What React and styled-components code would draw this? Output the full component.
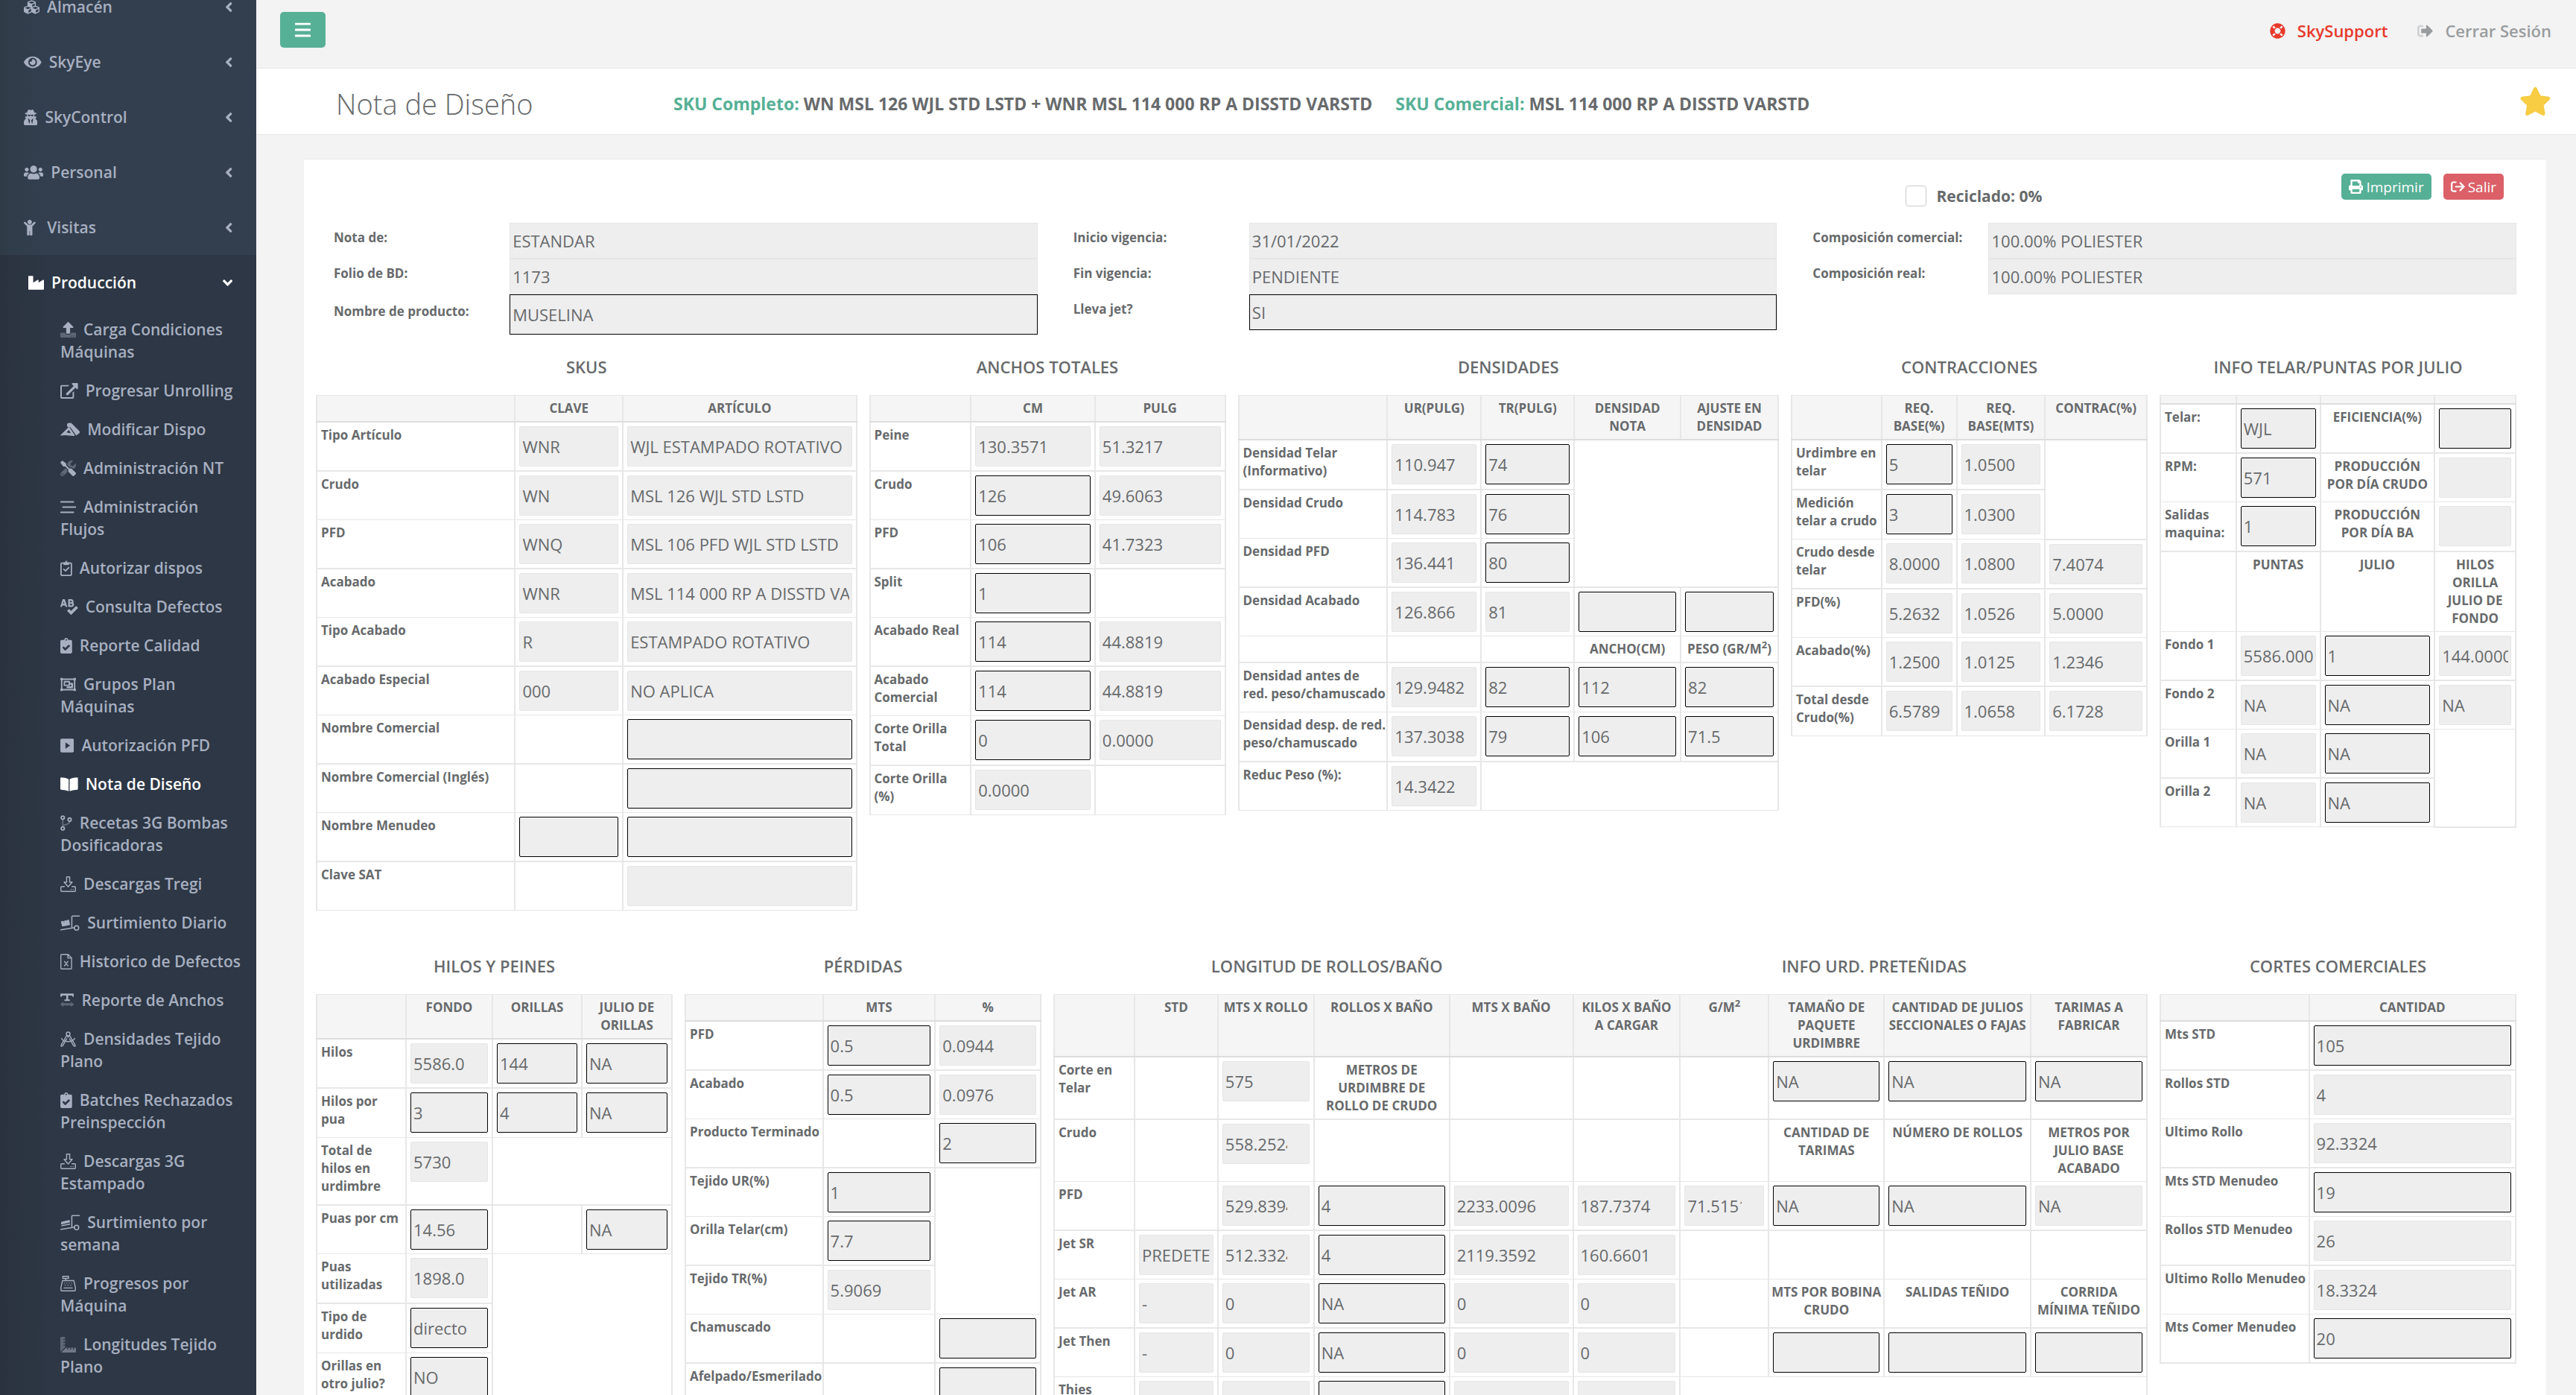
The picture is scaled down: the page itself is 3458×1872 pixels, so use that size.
import React from "react";
import styled, { createGlobalStyle, css } from "styled-components";
import { IconContext } from "react-icons";
import {
  FaCubes, FaEye, FaUserSecret, FaUsers, FaChild, FaIndustry, FaAngleLeft, FaAngleDown,
  FaSpellCheck, FaClipboardCheck, FaBookOpen, FaLifeRing, FaStar, FaPrint,
} from "react-icons/fa";

const ink = "#676a6c";
const line = "#e7e7e7";
const green = "#56b095";

const GlobalStyle = createGlobalStyle`
  * { box-sizing: border-box; }
  body {
    margin: 0;
    background: #f3f3f3;
    color: ${ink};
    font-family: "Open Sans", "Noto Sans", sans-serif;
    font-size: 21px;
    line-height: 30px;
  }
  h1, h2, p, ul { margin: 0; padding: 0; font-weight: inherit; }
  ul { list-style: none; }
  a { color: inherit; text-decoration: none; }
  button, input { font-family: inherit; color: inherit; }
`;

/* ---------- icons ---------- */

const Svg = styled.svg`
  fill: currentColor;
`;

const Glyph = ({ w = 512, children }) => (
  <Svg viewBox={`0 0 ${w} 512`} aria-hidden="true">{children}</Svg>
);

const Outline = ({ w = 512, weight = 40, children }) => (
  <Svg viewBox={`0 0 ${w} 512`} aria-hidden="true" style={{ fill: "none" }}
    stroke="currentColor" strokeWidth={weight} strokeLinecap="round" strokeLinejoin="round">
    {children}
  </Svg>
);

const UploadIcon = () => (
  <Glyph>
    <path d="M296 384h-80c-13.3 0-24-10.7-24-24V192h-87.7c-17.8 0-26.7-21.5-14.1-34.1L242.3 5.7c7.5-7.5 19.8-7.5 27.3 0l152.2 152.2c12.6 12.6 3.7 34.1-14.1 34.1H320v168c0 13.3-10.7 24-24 24z" />
    <path opacity=".4" d="M512 376v112c0 13.3-10.7 24-24 24H24c-13.3 0-24-10.7-24-24V376c0-13.3 10.7-24 24-24h136v8c0 30.9 25.1 56 56 56h80c30.9 0 56-25.1 56-56v-8h136c13.3 0 24 10.7 24 24zm-124 88c0-11-9-20-20-20s-20 9-20 20 9 20 20 20 20-9 20-20zm64 0c0-11-9-20-20-20s-20 9-20 20 9 20 20 20 20-9 20-20z" />
  </Glyph>
);

const ExternalIcon = () => (
  <Glyph w={576}>
    <path d="M0 112c0-26 21-48 48-48h250l-48 48H48v352h352V310l48-40v194c0 27-21 48-48 48H48c-26 0-48-21-48-48z" />
    <path d="M400 0h152c13 0 24 11 24 24v152c0 21-26 32-41 17l-42-42-246 246c-9 9-24 9-34 0l-22-22c-9-9-9-24 0-34L437 95l-54-54C368 26 379 0 400 0z" />
  </Glyph>
);

const HandIcon = () => (
  <Glyph w={640}>
    <path d="M232 56 C250 40 300 34 345 36 L378 58 L610 290 C640 322 648 344 622 372 L520 452 L330 180 L250 180 C215 165 210 80 232 56z" />
    <path fillRule="evenodd" d="M2 440 L255 190 L300 182 L480 448 L440 466 L140 436 L40 450 C8 456 -6 450 2 440z M205 350 L345 378 L280 268z" />
  </Glyph>
);

const ToolsIcon = () => (
  <Glyph>
    <path d="M501.1 395.7L384 278.6c-23.1-23.1-57.6-27.6-85.4-13.9L192 158.1V96L64 0 0 64l96 128h62.1l106.6 106.6c-13.6 27.8-9.2 62.3 13.9 85.4l117.1 117.1c14.6 14.6 38.2 14.6 52.7 0l52.7-52.7c14.5-14.6 14.5-38.2 0-52.7z" />
    <path opacity=".4" d="M331.7 225c28.3 0 54.9 11 74.9 31l19.4 19.4c15.8-6.9 30.8-16.5 43.8-29.5 37.1-37.1 49.7-89.3 37.9-136.7-2.2-9-13.5-12.1-20.1-5.5l-74.4 74.4-67.9-11.3L334 98.9l74.4-74.4c6.6-6.6 3.4-17.9-5.7-20.2-47.4-11.7-99.6.9-136.6 37.9-28.5 28.5-41.9 66.1-41.2 103.6l82.1 82.1c8.1-1.9 16.5-2.9 24.7-2.9zm-103.9 82l-56.7-56.7L18.7 402.8c-25 25-25 65.5 0 90.5s65.5 25 90.5 0l123.6-123.6c-7.6-19.9-9.9-41.6-5-62.7zM64 472c-13.2 0-24-10.8-24-24 0-13.3 10.7-24 24-24s24 10.7 24 24c0 13.2-10.7 24-24 24z" />
  </Glyph>
);

const StreamIcon = () => (
  <Glyph>
    <rect x="0" y="60" width="448" height="52" rx="14" />
    <rect x="64" y="230" width="448" height="52" rx="14" />
    <rect x="0" y="400" width="448" height="52" rx="14" />
  </Glyph>
);

const ClipboardIcon = () => (
  <Outline w={384} weight={44}>
    <rect x="22" y="86" width="340" height="404" rx="26" />
    <path d="M112 290 L168 344 L276 238" />
    <path d="M120 80h144v48H120z M192 30v40" fill="currentColor" />
  </Outline>
);

const GroupIcon = () => (
  <Outline weight={46}>
    <rect x="44" y="84" width="424" height="344" />
    <path strokeWidth="76" d="M40 80h1 M471 80h1 M40 432h1 M471 432h1" strokeLinecap="square" />
    <path d="M132 164h160v120H132z" />
    <path d="M336 232h50v116H232" strokeWidth="60" />
  </Outline>
);

const PlayIcon = () => (
  <Glyph w={448}>
    <path fillRule="evenodd" d="M48 32h352c26 0 48 21 48 48v352c0 26-22 48-48 48H48c-27 0-48-22-48-48V80c0-27 21-48 48-48zm120 118v212l150-106z" />
  </Glyph>
);

const BranchIcon = () => (
  <Outline w={384} weight={44}>
    <circle cx="80" cy="80" r="52" />
    <circle cx="80" cy="432" r="52" />
    <circle cx="304" cy="144" r="52" />
    <path opacity=".45" d="M80 140v232 M304 204c0 110-120 80-214 140" />
  </Outline>
);

const DownloadIcon = () => (
  <Outline weight={34}>
    <path d="M206 20h100v170h84L256 340 122 190h84z" />
    <path d="M130 336H40c-12 0-22 10-22 22v112c0 14 10 24 22 24h432c12 0 22-10 22-24V358c0-12-10-22-22-22h-90" />
    <path d="M350 424h2 M420 424h2" />
  </Outline>
);

const CartIcon = ({ flat }) => (
  <Outline w={640} weight={38}>
    <path d="M624 32H400c-14 0-24 8-24 24v340" />
    <path d="M20 484 L436 412" />
    <circle cx="530" cy="420" r="72" />
    {flat ? (
      <path fill="currentColor" d="M50 250 L290 196 L300 240 L40 300z M50 360 L310 310" />
    ) : (
      <path fill="currentColor" d="M40 220 L90 210 L110 270 L150 262 L140 200 L190 190 L210 250 L240 242 L230 180 L270 172 L296 310 L70 352z" />
    )}
  </Outline>
);

const FileIcon = () => (
  <Outline w={384} weight={34}>
    <path d="M40 17h212l115 115v340c0 12-10 23-23 23H40c-13 0-23-11-23-23V40c0-13 10-23 23-23z M246 20v118h118" />
    <path d="M136 250l112 140 M248 250L136 390" />
  </Outline>
);

const TextWidthIcon = () => (
  <Glyph w={448}>
    <path d="M20 32h408c11 0 20 9 20 20v80h-56V96H256v128h56v48H136v-48h56V96H56v36H0V52c0-11 9-20 20-20z" />
    <path opacity=".4" d="M440 374 L346 300v48H102v-48L8 374c-8 7-8 17 0 24l94 72v-48h244v48l94-72c8-7 8-17 0-24z" />
  </Glyph>
);

const CompassIcon = () => (
  <Outline weight={34}>
    <circle cx="256" cy="84" r="60" />
    <path d="M214 130 L30 440 L24 490 L76 470 L210 246 M298 130 L482 440 L488 490 L436 470 L302 246" />
    <path d="M40 230c60 130 340 150 434 0 M226 150l30 40 30-40" />
  </Outline>
);

const RegisterIcon = () => (
  <Outline weight={34}>
    <path d="M80 20h190v64H80z M176 86v70" />
    <path d="M70 160h372l50 220v90c0 14-10 24-24 24H44c-14 0-24-10-24-24v-90z" />
    <path d="M120 400h272" />
    <path d="M130 240h2 M210 240h2 M290 240h2 M370 240h2 M160 310h2 M250 310h2 M340 310h2" />
  </Outline>
);

const RulerIcon = () => (
  <Glyph>
    <path opacity=".4" d="M160 288h-56c-4 0-8-4-8-8v-16c0-4 4-8 8-8h56v-64h-56c-4 0-8-4-8-8v-16c0-4 4-8 8-8h56V96h-56c-4 0-8-4-8-8V72c0-4 4-8 8-8h56V32c0-18-14-32-32-32H32C14 0 0 14 0 32v448c0 3 1 5 1 8l159-159z" />
    <path opacity=".55" d="M480 352h-32v56c0 4-4 8-8 8h-16c-4 0-8-4-8-8v-56h-64v56c0 4-4 8-8 8h-16c-4 0-8-4-8-8v-56h-64v56c0 4-4 8-8 8h-16c-4 0-8-4-8-8v-56h-41L24 511c3 0 5 1 8 1h448c18 0 32-14 32-32v-96c0-18-14-32-32-32z" />
  </Glyph>
);

const BarsIcon = () => (
  <Glyph w={448}>
    <rect x="0" y="56" width="448" height="60" rx="12" />
    <rect x="0" y="226" width="448" height="60" rx="12" />
    <rect x="0" y="396" width="448" height="60" rx="12" />
  </Glyph>
);

const SignOutIcon = () => (
  <Glyph>
    <path opacity=".4" d="M96 64h84c7 0 12 5 12 12v40c0 7-5 12-12 12H96c-18 0-32 14-32 32v192c0 18 14 32 32 32h84c7 0 12 5 12 12v40c0 7-5 12-12 12H96c-53 0-96-43-96-96V160c0-53 43-96 96-96z" />
    <path d="M497 273L329 441c-15 15-41 4.500-41-17v-96H152c-13 0-24-11-24-24v-96c0-13 11-24 24-24h136V88c0-21 26-32 41-17l168 168c9 9 9 25 0 34z" />
  </Glyph>
);

const ExitIcon = () => (
  <Outline weight={60}>
    <path d="M180 94H96c-36 0-66 30-66 66v192c0 36 30 66 66 66h84" />
    <path d="M180 256h280 M340 124l132 132-132 132" />
  </Outline>
);

/* ---------- sidebar ---------- */

const Shell = styled.div`
  display: flex;
  height: 100vh;
  overflow: hidden;
`;

const Sidebar = styled.nav`
  flex: none;
  width: 344px;
  overflow: hidden;
  background: linear-gradient(to right, #2f3c48, #333f4f 66px);
  color: #a7afc0;
  font-weight: 600;
`;

const Menu = styled.ul`
  margin-top: -28px;
`;

const Section = styled.li`
  ${(p) => p.$open && css`
    background: linear-gradient(to right, #2a323e, #2d3745 66px);
    padding-bottom: 16px;
  `}
`;

const iconSize = css`
  svg {
    flex: none;
    width: auto;
    height: 21px;
  }
`;

const SectionLink = styled.a`
  display: flex;
  align-items: center;
  gap: 10px;
  padding: 22px 32px 22px ${(p) => (p.$open ? 38 : 32)}px;
  color: ${(p) => (p.$open ? "#fff" : "inherit")};
  ${iconSize}
  svg:last-child { margin-left: auto; }
`;

const SubLink = styled.a`
  display: block;
  padding: 11px 18px 11px 81px;
  color: ${(p) => (p.$current ? "#fff" : "inherit")};
  ${iconSize}
  svg {
    margin-right: 10px;
    vertical-align: -3px;
  }
`;

const sections = [
  ["Almacén", FaCubes], ["SkyEye", FaEye], ["SkyControl", FaUserSecret],
  ["Personal", FaUsers], ["\u00a0Visitas", FaChild],
];

const pages = [
  ["Carga Condiciones Máquinas", UploadIcon],
  ["Progresar Unrolling", ExternalIcon],
  ["Modificar Dispo", HandIcon],
  ["Administración NT", ToolsIcon],
  ["Administración Flujos", StreamIcon],
  ["Autorizar dispos", ClipboardIcon],
  ["Consulta Defectos", FaSpellCheck],
  ["Reporte Calidad", FaClipboardCheck],
  ["Grupos Plan Máquinas", GroupIcon],
  ["Autorización PFD", PlayIcon],
  ["Nota de Diseño", FaBookOpen],
  ["Recetas 3G Bombas Dosificadoras", BranchIcon],
  ["Descargas Tregi", DownloadIcon],
  ["Surtimiento Diario", CartIcon],
  ["Historico de Defectos", FileIcon],
  ["Reporte de Anchos", TextWidthIcon],
  ["Densidades Tejido Plano", CompassIcon],
  ["Batches Rechazados Preinspección", FaClipboardCheck],
  ["Descargas 3G Estampado", DownloadIcon],
  ["Surtimiento por semana", () => <CartIcon flat />],
  ["Progresos por Máquina", RegisterIcon],
  ["Longitudes Tejido Plano", RulerIcon],
];

/* ---------- page chrome ---------- */

const Main = styled.main`
  flex: 1;
  min-width: 0;
`;

const TopBar = styled.header`
  display: flex;
  justify-content: space-between;
  align-items: flex-start;
  height: 92px;
  padding: 16px 33px 0 32px;
  border-bottom: 1px solid ${line};
`;

const MenuButton = styled.button`
  display: flex;
  align-items: center;
  height: 48px;
  padding: 0 20px;
  border: 0;
  border-radius: 5px;
  background: ${green};
  color: #fff;
  svg { width: auto; height: 24px; }
`;

const TopLinks = styled.div`
  display: flex;
  gap: 40px;
  padding-top: 10px;
  font-size: 22px;
  font-weight: 600;
`;

const TopLink = styled.a`
  display: flex;
  align-items: center;
  gap: 16px;
  color: ${(p) => (p.$alert ? "#e8392a" : "#999c9e")};
  ${iconSize}
`;

const Heading = styled.div`
  display: grid;
  grid-template-columns: 453px 1fr auto;
  align-items: center;
  height: 89px;
  padding: 0 33px 0 107px;
  background: #fff;
  border-bottom: 1px solid ${line};
`;

const Title = styled.h1`
  padding-top: 5px;
  font-size: 38px;
  font-weight: 300;
  line-height: 48px;
`;

const Skus = styled.div`
  display: flex;
  gap: 31px;
  padding-top: 5px;
  font-size: 23px;
  font-weight: 700;
`;

const Accent = styled.span`
  color: ${green};
`;

const StarButton = styled.button`
  display: flex;
  padding: 0;
  border: 0;
  background: none;
  color: #f8cc43;
  svg { width: auto; height: 38px; }
`;

const Card = styled.section`
  margin: 32px 40px 0 64px;
  padding: 0 40px 40px 16px;
  background: #fff;
  border-top: 1px solid ${line};
`;

const Tools = styled.div`
  display: grid;
  grid-template-columns: 1fr 585px auto;
  align-items: start;
  height: 85px;
  padding: 19px 17px 0 0;
`;

const Check = styled.label`
  grid-column: 2;
  display: flex;
  align-items: center;
  gap: 13px;
  padding-top: 15px;
  font-weight: 700;
`;

const CheckBox = styled.input`
  appearance: none;
  width: 28px;
  height: 28px;
  margin: 0;
  border: 1px solid #ccc;
  border-radius: 4px;
  background: #fff;
`;

const Buttons = styled.div`
  display: flex;
  gap: 16px;
`;

const Button = styled.button`
  display: flex;
  align-items: center;
  gap: 4px;
  height: 35px;
  padding: 0 10px;
  border: 0;
  border-radius: 5px;
  background: ${(p) => p.$tone};
  color: #fff;
  font-size: 19px;
  svg { width: auto; height: 19px; }
`;

/* ---------- form ---------- */

const Field = styled.input`
  display: block;
  width: 100%;
  height: 54px;
  padding: 0 ${(p) => (p.$spin ? 29 : 3)}px 0 3px;
  border: 1px solid ${(p) => (p.$edit ? "#000" : "#e5e6e7")};
  border-radius: 2px;
  outline: 0;
  background: #eee;
  font-size: 22px;
`;

const Form = styled.form`
  display: grid;
  grid-template-columns: repeat(3, 1fr);
  align-items: start;
  column-gap: 48px;
  padding-left: 24px;
`;

const FormRow = styled.div`
  display: grid;
  grid-template-columns: 1fr 3fr;
  label {
    padding-top: ${(p) => (p.$tall ? 11 : 8)}px;
    font-size: 17px;
    font-weight: 700;
    line-height: 24px;
  }
  input {
    height: ${(p) => (p.$tall ? 54 : 48)}px;
    border-radius: 0;
  }
`;

const general = [
  [["Nota de:", "ESTANDAR"], ["Folio de BD:", "1173"], ["Nombre de producto:", "MUSELINA", true, true]],
  [["Inicio vigencia:", "31/01/2022"], ["Fin vigencia:", "PENDIENTE"], ["Lleva jet?", "SI", true]],
  [["Composición comercial:", "100.00% POLIESTER"], ["Composición real:", "100.00% POLIESTER"]],
];

/* ---------- data tables ---------- */

const Panels = styled.div`
  display: grid;
  grid-template-columns: repeat(12, 1fr);
  align-items: start;
  column-gap: 16px;
  padding-top: ${(p) => p.$space}px;
`;

const Panel = styled.section`
  grid-column: span ${(p) => p.$span};
`;

const Titles = styled.div`
  display: flex;
`;

const PanelTitle = styled.h2`
  flex: 1;
  margin-bottom: 25px;
  font-size: 22px;
  font-weight: 600;
  line-height: 26px;
  text-align: center;
`;

const Table = styled.table`
  width: 100%;
  table-layout: fixed;
  border-collapse: collapse;
  font-size: 17px;
  line-height: 24px;
`;

const cell = css`
  padding: 5px;
  border: 2px solid ${line};
  border-top-width: 1px;
  border-bottom-width: 1px;
  vertical-align: top;
  tr:nth-child(odd) > & { border-bottom-width: 2px; }
`;

const HeadCell = styled.th`
  ${cell}
  padding-right: 2px;
  padding-left: 2px;
  background: #f5f5f5;
  border-bottom-color: #ddd;
  text-align: center;
`;

const LabelCell = styled.th`
  ${cell}
  padding-right: 1px;
  text-align: left;
  label { display: block; margin-bottom: 7px; white-space: pre-line; }
`;

const Cell = styled.td`
  ${cell}
`;

const CaptionCell = styled.td`
  ${cell}
  padding-right: 2px;
  padding-left: 2px;
  font-weight: 700;
  text-align: center;
`;

const Sup = styled.sup`
  font-size: 13px;
  line-height: 0;
`;

const g = (value) => ({ kind: "field", value });
const e = (value = "") => ({ kind: "field", value, edit: true });
const n = (value) => ({ kind: "field", value, spin: true });
const c = (text) => ({ kind: "caption", text });
const x = (colSpan = 1, rowSpan = 1) => ({ kind: "blank", colSpan, rowSpan });

const squared = (text) => {
  const [before, after] = text.split("²");
  return after === undefined ? text : <>{before}<Sup>2</Sup>{after}</>;
};

function DataTable({ name, cols, head, rows }) {
  const total = cols.reduce((a, b) => a + b, 0);
  return (
    <Table aria-label={name}>
      <colgroup>
        {cols.map((w, i) => <col key={i} style={{ width: `${(w / total) * 100}%` }} />)}
      </colgroup>
      <thead>
        <tr>{head.map((h, i) => <HeadCell key={i} scope="col">{squared(h)}</HeadCell>)}</tr>
      </thead>
      <tbody>
        {rows.map(([label, ...cells], r) => {
          const firstField = cells.findIndex((k) => k.kind === "field");
          const id = `${name}-${r}`.replace(/[^\w-]/g, "");
          return (
            <tr key={r}>
              <LabelCell scope="row">
                {label && <label htmlFor={`${id}-${firstField}`}>{label}</label>}
              </LabelCell>
              {cells.map((k, i) => {
                if (k.kind === "caption") return <CaptionCell key={i}>{squared(k.text)}</CaptionCell>;
                if (k.kind === "blank") return <Cell key={i} colSpan={k.colSpan} rowSpan={k.rowSpan} />;
                return (
                  <Cell key={i}>
                    <Field id={`${id}-${i}`} aria-label={`${label} ${head[i + 1] || ""}`.trim()}
                      readOnly defaultValue={k.value} $edit={k.edit} $spin={k.spin} />
                  </Cell>
                );
              })}
            </tr>
          );
        })}
      </tbody>
    </Table>
  );
}

const upper = [
  {
    titles: ["SKUS"], span: 3, cols: [267, 145, 314],
    head: ["", "CLAVE", "ARTÍCULO"],
    rows: [
      ["Tipo Artículo", g("WNR"), g("WJL ESTAMPADO ROTATIVO")],
      ["Crudo", g("WN"), g("MSL 126 WJL STD LSTD")],
      ["PFD", g("WNQ"), g("MSL 106 PFD WJL STD LSTD")],
      ["Acabado", g("WNR"), g("MSL 114 000 RP A DISSTD VARSTD")],
      ["Tipo Acabado", g("R"), g("ESTAMPADO ROTATIVO")],
      ["Acabado Especial", g("000"), g("NO APLICA")],
      ["Nombre Comercial", x(), e()],
      ["Nombre Comercial (Inglés)", x(), e()],
      ["Nombre Menudeo", e(), e()],
      ["Clave SAT", x(), g("")],
    ],
  },
  {
    titles: ["ANCHOS TOTALES"], span: 2, cols: [136, 167, 175],
    head: ["", "CM", "PULG"],
    rows: [
      ["Peine", g("130.3571"), g("51.3217")],
      ["Crudo", e("126"), g("49.6063")],
      ["PFD", e("106"), g("41.7323")],
      ["Split", e("1"), x()],
      ["Acabado Real", e("114"), g("44.8819")],
      ["Acabado Comercial", e("114"), g("44.8819")],
      ["Corte Orilla Total", e("0"), g("0.0000")],
      ["Corte Orilla (%)", g("0.0000"), x()],
    ],
  },
  {
    titles: ["DENSIDADES"], span: 3, cols: [200, 126, 125, 143, 131],
    head: ["", "UR(PULG)", "TR(PULG)", "DENSIDAD NOTA", "AJUSTE EN DENSIDAD"],
    rows: [
      ["Densidad Telar (Informativo)", g("110.947"), e("74"), x(2, 3)],
      ["Densidad Crudo", g("114.783"), e("76")],
      ["Densidad PFD", g("136.441"), e("80")],
      ["Densidad Acabado", g("126.866"), g("81"), e(), e()],
      ["", x(), x(), c("ANCHO(CM)"), c("PESO (GR/M²)")],
      ["Densidad antes de\nred. peso/chamuscado", g("129.9482"), e("82"), e("112"), e("82")],
      ["Densidad desp. de red. peso/chamuscado", g("137.3038"), e("79"), e("106"), e("71.5")],
      ["Reduc Peso (%):", g("14.3422"), x(3)],
    ],
  },
  {
    titles: ["CONTRACCIONES"], span: 2, cols: [121, 101, 119, 137],
    head: ["", "REQ. BASE(%)", "REQ. BASE(MTS)", "CONTRAC(%)"],
    rows: [
      ["Urdimbre en telar", e("5"), g("1.0500"), x(1, 2)],
      ["Medición telar a crudo", e("3"), g("1.0300")],
      ["Crudo desde telar", g("8.0000"), g("1.0800"), g("7.4074")],
      ["PFD(%)", g("5.2632"), g("1.0526"), g("5.0000")],
      ["Acabado(%)", g("1.2500"), g("1.0125"), g("1.2346")],
      ["Total desde Crudo(%)", g("6.5789"), g("1.0658"), g("6.1728")],
    ],
  },
  {
    titles: ["INFO TELAR/PUNTAS POR JULIO"], span: 2, cols: [102, 113, 154, 109],
    head: ["", "", "", ""],
    rows: [
      ["Telar:", e("WJL"), c("EFICIENCIA(%)"), e()],
      ["RPM:", e("571"), c("PRODUCCIÓN POR DÍA CRUDO"), g("")],
      ["Salidas maquina:", e("1"), c("PRODUCCIÓN POR DÍA BA"), g("")],
      ["", c("PUNTAS"), c("JULIO"), c("HILOS ORILLA JULIO DE FONDO")],
      ["Fondo 1", g("5586.0000"), e("1"), g("144.0000")],
      ["Fondo 2", g("NA"), e("NA"), g("NA")],
      ["Orilla 1", g("NA"), e("NA"), x(1, 2)],
      ["Orilla 2", g("NA"), e("NA")],
    ],
  },
];

const lower = [
  {
    titles: ["HILOS Y PEINES"], span: 2, cols: [120, 116, 120, 121],
    head: ["", "FONDO", "ORILLAS", "JULIO DE ORILLAS"],
    rows: [
      ["Hilos", g("5586.0"), e("144"), e("NA")],
      ["Hilos por pua", e("3"), e("4"), e("NA")],
      ["Total de hilos en urdimbre", g("5730"), x(2)],
      ["Puas por cm", e("14.56"), x(), e("NA")],
      ["Puas utilizadas", g("1898.0"), x(2, 3)],
      ["Tipo de urdido", e("directo")],
      ["Orillas en otro julio?", e("NO")],
    ],
  },
  {
    titles: ["PÉRDIDAS"], span: 2, cols: [185, 151, 142],
    head: ["", "MTS", "%"],
    rows: [
      ["PFD", e("0.5"), g("0.0944")],
      ["Acabado", e("0.5"), g("0.0976")],
      ["Producto Terminado", x(), e("2")],
      ["Tejido UR(%)", e("1"), x(1, 3)],
      ["Orilla Telar(cm)", e("7.7")],
      ["Tejido TR(%)", g("5.9069")],
      ["Chamuscado", x(), e()],
      ["Afelpado/Esmerilado", x(), e()],
    ],
  },
  {
    titles: ["LONGITUD DE ROLLOS/BAÑO", "INFO URD. PRETEÑIDAS"], span: 6,
    cols: [108, 112, 129, 182, 166, 144, 119, 155, 197, 156],
    head: ["", "STD", "MTS X ROLLO", "ROLLOS X BAÑO", "MTS X BAÑO", "KILOS X BAÑO A\u00a0CARGAR", "G/M²",
      "TAMAÑO DE PAQUETE URDIMBRE", "CANTIDAD DE JULIOS SECCIONALES O FAJAS", "TARIMAS A FABRICAR"],
    rows: [
      ["Corte en Telar", x(), n("575"), c("METROS DE URDIMBRE DE ROLLO DE CRUDO"), x(), x(), x(), e("NA"), e("NA"), e("NA")],
      ["Crudo", x(), n("558.2524"), x(), x(), x(), x(), c("CANTIDAD DE TARIMAS"), c("NÚMERO DE ROLLOS"), c("METROS POR JULIO BASE ACABADO")],
      ["PFD", x(), n("529.8394"), e("4"), g("2233.0096"), g("187.7374"), n("71.5151"), e("NA"), e("NA"), g("NA")],
      ["Jet SR", g("PREDETERMINADO"), n("512.3324"), e("4"), g("2119.3592"), g("160.6601"), x(), x(), x(), x()],
      ["Jet AR", g("-"), n("0"), e("NA"), g("0"), g("0"), x(), c("MTS POR BOBINA CRUDO"), c("SALIDAS TEÑIDO"), c("CORRIDA MÍNIMA TEÑIDO")],
      ["Jet Then", g("-"), n("0"), e("NA"), g("0"), g("0"), x(), e(), e(), e()],
      ["Thies", g(""), n(""), e(), g(""), g(""), x(4)],
    ],
  },
  {
    titles: ["CORTES COMERCIALES"], span: 2, cols: [200, 278],
    head: ["", "CANTIDAD"],
    rows: [
      ["Mts STD", e("105")],
      ["Rollos STD", g("4")],
      ["Ultimo Rollo", g("92.3324")],
      ["Mts STD Menudeo", e("19")],
      ["Rollos STD Menudeo", g("26")],
      ["Ultimo Rollo Menudeo", g("18.3324")],
      ["Mts Comer Menudeo", e("20")],
    ],
  },
];

const PanelGroup = ({ panels, space }) => (
  <Panels $space={space}>
    {panels.map((p) => (
      <Panel key={p.titles[0]} $span={p.span}>
        <Titles>{p.titles.map((t) => <PanelTitle key={t}>{t}</PanelTitle>)}</Titles>
        <DataTable name={p.titles[0]} cols={p.cols} head={p.head} rows={p.rows} />
      </Panel>
    ))}
  </Panels>
);

export default function App() {
  return (
    <IconContext.Provider value={{ size: "auto" }}>
      <GlobalStyle />
      <Shell>
        <Sidebar>
          <Menu>
            {sections.map(([name, Icon]) => (
              <Section key={name}>
                <SectionLink href="#"><Icon />{name}<FaAngleLeft /></SectionLink>
              </Section>
            ))}
            <Section $open>
              <SectionLink href="#" $open><FaIndustry />Producción<FaAngleDown /></SectionLink>
              <ul>
                {pages.map(([name, Icon]) => (
                  <li key={name}>
                    <SubLink href="#" $current={name === "Nota de Diseño"}><Icon />{name}</SubLink>
                  </li>
                ))}
              </ul>
            </Section>
          </Menu>
        </Sidebar>
        <Main>
          <TopBar>
            <MenuButton type="button" aria-label="Menú"><BarsIcon /></MenuButton>
            <TopLinks>
              <TopLink href="#" $alert><FaLifeRing />SkySupport</TopLink>
              <TopLink href="#"><SignOutIcon />Cerrar Sesión</TopLink>
            </TopLinks>
          </TopBar>
          <Heading>
            <Title>Nota de Diseño</Title>
            <Skus>
              <p><Accent>SKU Completo:</Accent> WN MSL 126 WJL STD LSTD + WNR MSL 114 000 RP A DISSTD VARSTD</p>
              <p><Accent>SKU Comercial:</Accent> MSL 114 000 RP A DISSTD VARSTD</p>
            </Skus>
            <StarButton type="button" aria-label="Favorito"><FaStar /></StarButton>
          </Heading>
          <Card>
            <Tools>
              <Check><CheckBox type="checkbox" />Reciclado: 0%</Check>
              <Buttons>
                <Button type="button" $tone={green}><FaPrint />Imprimir</Button>
                <Button type="button" $tone="#dc6068"><ExitIcon />Salir</Button>
              </Buttons>
            </Tools>
            <Form>
              {general.map((column, i) => (
                <div key={i}>
                  {column.map(([label, value, edit, tall], r) => (
                    <FormRow key={label} $tall={tall}>
                      <label htmlFor={`general-${i}-${r}`}>{label}</label>
                      <Field id={`general-${i}-${r}`} readOnly defaultValue={value} $edit={edit} />
                    </FormRow>
                  ))}
                </div>
              ))}
            </Form>
            <PanelGroup panels={upper} space={30} />
            <PanelGroup panels={lower} space={61} />
          </Card>
        </Main>
      </Shell>
    </IconContext.Provider>
  );
}
